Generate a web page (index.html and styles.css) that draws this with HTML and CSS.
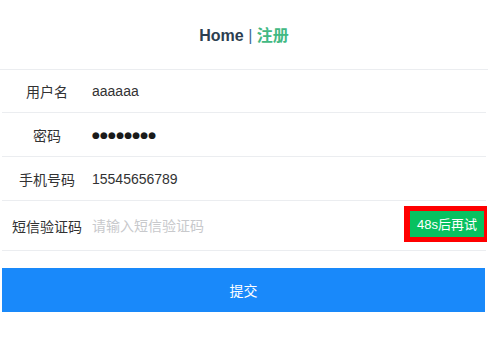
FILE: index.html
```html
<!DOCTYPE html>
<html lang="zh-CN">
<head>
<meta charset="utf-8">
<title>注册</title>
<link rel="stylesheet" href="styles.css">
</head>
<body>
<div class="nav">
  <a class="nav-link" href="#">Home</a> <span class="nav-sep">|</span> <a class="nav-link active" href="#">注册</a>
</div>
<form class="form">
  <div class="field field-first">
    <label class="field-label">用户名</label>
    <input class="field-input" type="text" value="aaaaaa">
  </div>
  <div class="field">
    <label class="field-label">密码</label>
    <div class="field-dots">●●●●●●●●</div>
  </div>
  <div class="field">
    <label class="field-label">手机号码</label>
    <input class="field-input" type="text" value="15545656789">
  </div>
  <div class="field field-sms">
    <label class="field-label">短信验证码</label>
    <input class="field-input" type="text" placeholder="请输入短信验证码">
    <div class="code-wrap"><button class="code-btn" type="button">48s后再试</button></div>
  </div>
  <button class="submit" type="button">提交</button>
</form>
</body>
</html>
```

FILE: styles.css
```css
html, body {
  margin: 0;
  padding: 0;
  background: #fff;
}
body {
  font-family: "Liberation Sans", "Noto Sans CJK SC", sans-serif;
  font-size: 14px;
  color: #323233;
}
.nav {
  height: 70px;
  box-sizing: border-box;
  padding-top: 22px;
  text-align: center;
  font-size: 16px;
  font-weight: bold;
  color: #2c3e50;
  border-bottom: 1px solid #ebedf0;
}
.nav-sep {
  font-weight: normal;
  color: #3d6a9a;
}
.nav-link {
  color: #2c3e50;
  text-decoration: none;
  font-weight: bold;
}
.nav-link.active {
  color: #42b983;
}
.form {
  margin: 0 2px;
}
.field {
  display: flex;
  align-items: center;
  height: 43px;
  padding-left: 10px;
  border-bottom: 1px solid #ebedf0;
}
.field-first {
  height: 42px;
}
.field-sms {
  height: 49px;
}
.field-label {
  width: 70px;
  margin-right: 10px;
  text-align: center;
  color: #323233;
  flex: none;
}
.field-input {
  flex: 1;
  min-width: 0;
  border: 0;
  outline: none;
  padding: 0;
  margin: 0;
  background: transparent;
  font-family: inherit;
  font-size: 14px;
  color: #323233;
}
.field-input::placeholder {
  color: #c8c9cc;
}
.field-dots {
  flex: 1;
  font-family: "DejaVu Sans", sans-serif;
  font-size: 9px;
  letter-spacing: 0.2px;
  color: #1a1a1a;
}
.code-wrap {
  flex: none;
  background: #ff0000;
  padding: 5px 3px 5px 6px;
  margin-right: -1px;
  margin-bottom: 4px;
  display: flex;
}
.code-btn {
  width: 74px;
  height: 26px;
  border: 0;
  margin: 0;
  padding: 0;
  background: #07c160;
  color: #fff;
  font-family: inherit;
  font-size: 13px;
}
.submit {
  display: block;
  width: calc(100% - 1px);
  height: 44px;
  margin: 17px 0 0 0;
  border: 0;
  padding: 0;
  background: #1989fa;
  color: #fff;
  font-family: inherit;
  font-size: 14px;
}
```
